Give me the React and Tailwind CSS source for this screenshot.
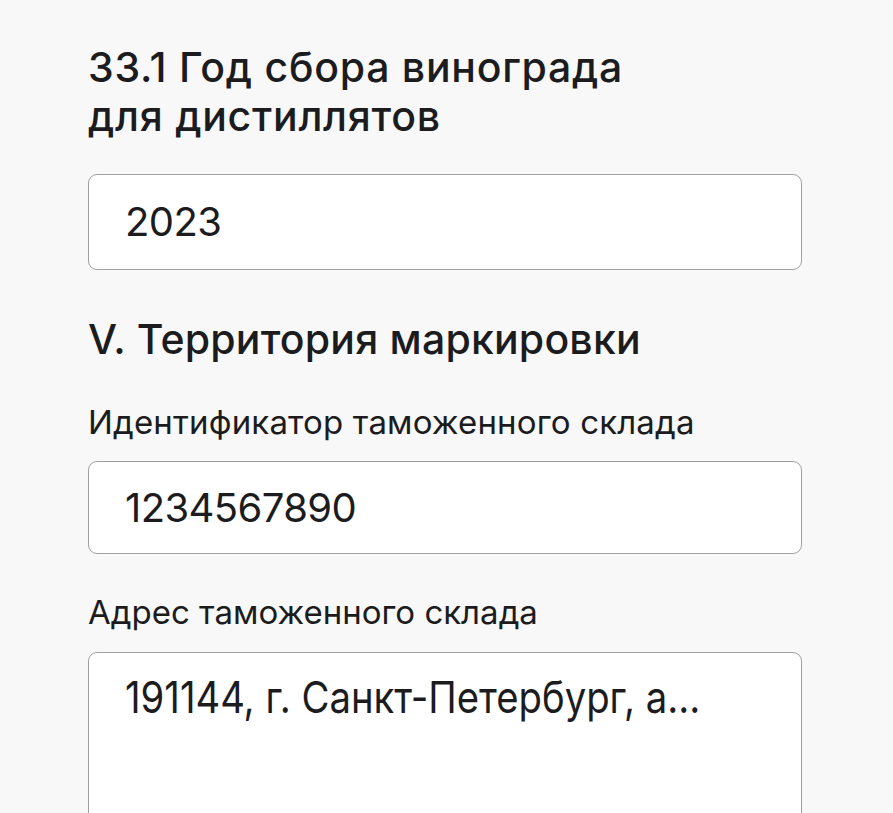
import React from 'react';

const Field = ({ value, height }) => (
    <div className={`w-full bg-white border border-[#a0a0a0] rounded-[9px] px-[36px] flex items-center ${height}`}>
        <span className="text-[40px] leading-none text-[#1c1c1e] tracking-[-0.015em]">{value}</span>
    </div>
);

const App = () => {
    return (
        <div className="h-screen bg-[#f8f8f8] pl-[88px] pr-[91px] pt-[43px] font-['Inter',sans-serif] overflow-hidden">
            <h2 className="text-[41px] leading-[49px] font-medium text-[#1c1c1e] tracking-[0.018em]">
                33.1 Год сбора винограда
                <br />
                для дистиллятов
            </h2>

            <div className="mt-[33px]">
                <Field value="2023" height="h-[96px]" />
            </div>

            <h2 className="mt-[45px] text-[41px] leading-[49px] font-medium text-[#1c1c1e] tracking-[0.005em]">
                V. Территория маркировки
            </h2>

            <p className="mt-[38px] text-[33px] leading-[40px] text-[#1c1c1e] tracking-[0.005em]">
                Идентификатор таможенного склада
            </p>
            <div className="mt-[19px]">
                <Field value="1234567890" height="h-[93px]" />
            </div>

            <p className="mt-[38px] text-[33px] leading-[40px] text-[#1c1c1e]">
                Адрес таможенного склада
            </p>
            <div className="mt-[20px] w-full h-[220px] bg-white border border-[#a0a0a0] rounded-[9px] px-[36px] pt-[22px]">
                <span className="inline-block origin-left scale-x-[0.87] text-[44px] leading-none text-[#1c1c1e] whitespace-nowrap">
                    191144, г. Санкт-Петербург, а...
                </span>
            </div>
        </div>
    );
};

export default App;
